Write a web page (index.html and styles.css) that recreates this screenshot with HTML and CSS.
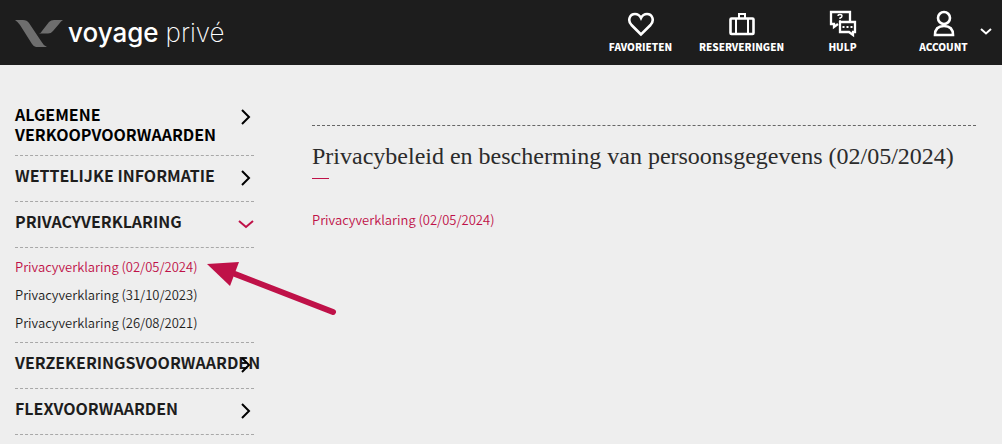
FILE: index.html
```html
<!DOCTYPE html>
<html lang="nl">
<head>
    <meta charset="UTF-8">
    <meta name="viewport" content="width=device-width, initial-scale=1.0">
    <title>Privacyverklaring - Voyage Privé</title>
    <link rel="stylesheet" href="styles.css">
</head>
<body>
    <header class="header">
        <a class="logo" href="#" aria-label="Voyage Privé">
            <svg class="logo-mark" width="48" height="29" viewBox="0 -2 48 29">
                <path d="M0 0H8Q12 0 14 3L26 21Q28 25 32 27H21Q19 27 17 24L5 5Q3 2 0 0Z"/>
                <path d="M48 0H39Q36 0 34 2L27 11Q26 13 24 13.500H33Q36 13.500 38 11L44 4Q46 1 48 0Z"/>
            </svg>
            <span class="logo-text">voyage <span class="logo-light">privé</span></span>
        </a>

        <nav class="menu">
            <a class="menu-item" href="#">
                <svg class="icon" width="28" height="28" viewBox="0 0 28 28">
                    <path class="thick" d="M14 24.500L4.500 15C0 10 3 4 8 4C11 4 13 6 14 8C15 6 17 4 20 4C25 4 28 10 23.500 15Z"/>
                </svg>
                Favorieten
            </a>
            <a class="menu-item" href="#">
                <svg class="icon" width="28" height="28" viewBox="0 0 28 28">
                    <path class="thick" d="M3.500 8.500H24.500Q25.500 8.500 25.500 9.500V23Q25.500 24 24.500 24H3.500Q2.500 24 2.500 23V9.500Q2.500 8.500 3.500 8.500Z"/>
                    <path d="M8 8V24M20 8V24M11 8V4H17V8"/>
                </svg>
                Reserveringen
            </a>
            <a class="menu-item" href="#">
                <svg class="icon" width="28" height="28" viewBox="0 0 28 28">
                    <path class="medium" d="M9 14L5 17V14H2V2H21V11"/>
                    <path class="medium" d="M11 12H26V22H24V25L20 22H11Z"/>
                    <path class="small" d="M9 6Q9 4.500 11 4.500Q13 4.500 13 6Q13 7.500 11 8V9M11 10V11.500"/>
                    <path d="M13.500 17H15.500M17.500 17H19.500M21.500 17H23.500"/>
                </svg>
                Hulp
            </a>
            <a class="menu-item" href="#">
                <svg class="icon" width="28" height="28" viewBox="0 0 28 28">
                    <circle class="thick" cx="14" cy="8" r="6"/>
                    <path class="thick" d="M5 25C5 19 8 16 14 16S23 19 23 25Z"/>
                </svg>
                Account
                <svg class="icon menu-arrow" width="12" height="8" viewBox="0 0 12 8">
                    <path d="M1 1L6 5.500L11 1"/>
                </svg>
            </a>
        </nav>
    </header>

    <div class="page">
        <aside class="sidebar">
            <button class="section current" type="button">Algemene verkoopvoorwaarden
                <svg class="arrow" width="16" height="16" viewBox="0 0 16 16"><path d="M4 1L11 8L4 15"/></svg>
            </button>
            <button class="section" type="button">Wettelijke informatie
                <svg class="arrow" width="16" height="16" viewBox="0 0 16 16"><path d="M4 1L11 8L4 15"/></svg>
            </button>
            <button class="section open" type="button" aria-expanded="true">Privacyverklaring
                <svg class="arrow" width="16" height="16" viewBox="0 0 16 16"><path d="M1 5L8 11L15 5"/></svg>
            </button>
            <ul class="versions">
                <li><a class="active" href="#">Privacyverklaring (02/05/2024)</a></li>
                <li><a href="#">Privacyverklaring (31/10/2023)</a></li>
                <li><a href="#">Privacyverklaring (26/08/2021)</a></li>
            </ul>
            <button class="section" type="button">Verzekeringsvoorwaarden
                <svg class="arrow" width="16" height="16" viewBox="0 0 16 16"><path d="M4 1L11 8L4 15"/></svg>
            </button>
            <button class="section" type="button">Flexvoorwaarden
                <svg class="arrow" width="16" height="16" viewBox="0 0 16 16"><path d="M4 1L11 8L4 15"/></svg>
            </button>

            <!-- Pointer to the current version -->
            <svg class="pointer" width="130" height="56" viewBox="0 0 130 56">
                <path class="pointer-line" d="M28 12L126 50"/>
                <path class="pointer-head" d="M0 2L32 0L23 24Z"/>
            </svg>
        </aside>

        <main class="content">
            <h1>Privacybeleid en bescherming van persoonsgegevens (02/05/2024)</h1>
            <a class="document" href="#">Privacyverklaring (02/05/2024)</a>
        </main>
    </div>
</body>
</html>
```
FILE: styles.css
```css
* {
    box-sizing: border-box;
}

body {
    margin: 0;
    background: #eee;
    color: #1d1d1d;
    font-family: 'Noto Sans CJK JP', 'Noto Sans', sans-serif;
    font-size: 13px;
}

a {
    color: inherit;
    text-decoration: none;
}

/* Header */
.header {
    display: flex;
    justify-content: space-between;
    height: 65px;
    padding: 0 8px 0 15px;
    background: #1d1d1d;
    color: #fff;
}

.logo {
    display: flex;
    align-items: center;
    gap: 5px;
}

.logo-mark {
    fill: #6e6e6e;
}

.logo-text {
    font-family: Inter, sans-serif;
    font-size: 26px;
    font-weight: 500;
    line-height: 32px;
}

.logo-light {
    font-weight: 200;
}

.menu {
    display: grid;
    grid-template-columns: repeat(4, 101px);
}

.menu-item {
    position: relative;
    display: flex;
    flex-direction: column;
    align-items: center;
    padding-top: 10px;
    font-size: 10px;
    font-weight: 900;
    line-height: 18px;
    text-transform: uppercase;
}

.icon {
    fill: none;
    stroke: #fff;
    stroke-width: 2;
}

.icon .thick {
    stroke-width: 2.6;
}

.icon .medium {
    stroke-width: 2.3;
}

.icon .small {
    stroke-width: 1.4;
}

.menu-arrow {
    position: absolute;
    top: 28px;
    right: 2px;
}

/* Layout */
.page {
    display: flex;
    gap: 58px;
    padding: 30px 26px 0 15px;
}

.sidebar {
    position: relative;
    flex: 0 0 239px;
    min-width: 0;
}

.section {
    position: relative;
    display: block;
    width: 100%;
    padding: 9px 0 16px;
    border: 0;
    border-bottom: 1px dashed #a8a8a8;
    background: none;
    color: inherit;
    font-family: inherit;
    font-size: 16px;
    font-weight: 700;
    line-height: 20px;
    text-align: left;
    text-transform: uppercase;
    cursor: pointer;
}

.section.current {
    padding-bottom: 11px;
    color: #000;
}

.arrow {
    position: absolute;
    top: 14px;
    right: 0;
    fill: none;
    stroke: #000;
    stroke-width: 2;
}

.open .arrow {
    stroke: #bf1148;
}

.versions {
    margin: 0;
    padding: 5px 0;
    border-bottom: 1px dashed #a8a8a8;
    list-style: none;
    line-height: 28px;
}

.versions a,
.document {
    font-weight: 350;
}

.versions .active,
.document {
    color: #bf1148;
}

.pointer {
    position: absolute;
    top: 167px;
    left: 192px;
}

.pointer-line {
    stroke: #bf1148;
    stroke-width: 6;
    stroke-linecap: round;
}

.pointer-head {
    fill: #bf1148;
}

/* Content */
.content {
    flex: 1;
    min-width: 0;
    margin-top: 30px;
    border-top: 1px dashed #666;
}

h1 {
    margin: 15px 0 28px;
    color: #2b2b2b;
    font-family: Georgia, 'Liberation Serif', serif;
    font-size: 24px;
    font-weight: 400;
    line-height: 30px;
}

h1::after {
    content: '';
    display: block;
    width: 17px;
    height: 1px;
    margin-top: 7px;
    background: #bf1148;
}

.document {
    line-height: 26px;
}
```
